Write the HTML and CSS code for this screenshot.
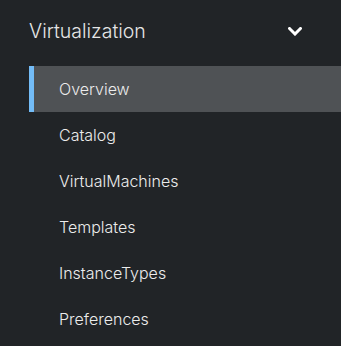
FILE: index.html
```html
<!DOCTYPE html>
<html lang="en">

<head>
    <meta charset="utf-8">
    <meta name="viewport" content="width=device-width, initial-scale=1.0">
    <title>Virtualization</title>
    <link rel="stylesheet" href="styles.css">
</head>

<body>
    <nav class="sidenav">
        <button class="sektion">
            <span>Virtualization</span>
            <!-- pil ned -->
            <svg class="pil" width="14" height="9" viewBox="0 0 14 9">
                <path d="M1.5 1.5 L7 7 L12.5 1.5" fill="none" stroke="#fff" stroke-width="3" stroke-linecap="square"/>
            </svg>
        </button>
        <ul class="menu">
            <li class="punkt valgt">Overview</li>
            <li class="punkt">Catalog</li>
            <li class="punkt">VirtualMachines</li>
            <li class="punkt">Templates</li>
            <li class="punkt">InstanceTypes</li>
            <li class="punkt">Preferences</li>
        </ul>
    </nav>
</body></html>
```

FILE: styles.css
```css
body {
    margin: 0;
    background-color: #212427;
    font-family: 'Inter', sans-serif;
}

.sidenav {
    width: 341px;
}

.sektion {
    display: flex;
    align-items: center;
    justify-content: space-between;
    width: 100%;
    height: 62px;
    padding: 0 39px 0 29px;
    border: none;
    background: none;
    color: #e6e6e6;
    font-family: 'Inter', sans-serif;
    font-size: 19.5px;
    font-weight: 350;
    box-sizing: border-box;
}

.pil {
    display: block;
}

.menu {
    list-style: none;
    margin: 4px 0 0 29px;
    padding: 0;
}

.punkt {
    display: flex;
    align-items: center;
    height: 46px;
    padding-left: 30px;
    color: #ececec;
    font-size: 16px;
    font-weight: 350;
}

.valgt {
    background-color: #4f5255;
    box-shadow: inset 5px 0 0 #73bcf7;
}
```
